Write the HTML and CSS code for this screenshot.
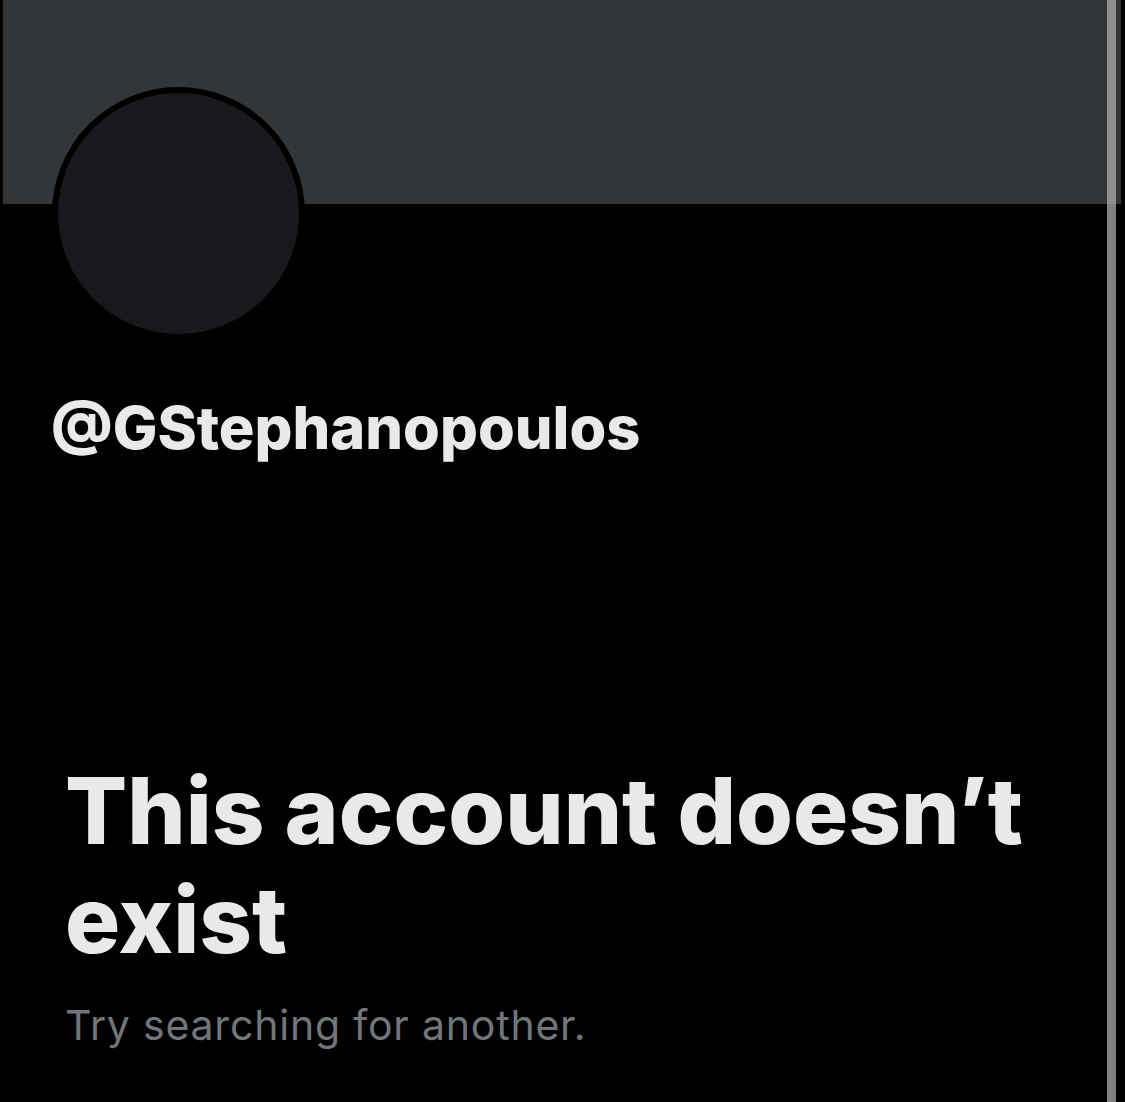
FILE: index.html
```html
<!DOCTYPE html>
<html lang="en">
<head>
<meta charset="utf-8">
<title>Profile</title>
<link rel="stylesheet" href="styles.css">
</head>
<body>
<div class="page">
  <main class="profile">
    <div class="banner"></div>
    <div class="avatar"></div>
    <div class="handle">@GStephanopoulos</div>
    <section class="empty">
      <h1 class="title">This account doesn’t exist</h1>
      <p class="sub">Try searching for another.</p>
    </section>
  </main>
  <div class="scrollbar"></div>
</div>
</body>
</html>
```

FILE: styles.css
```css
html, body {
  margin: 0;
  padding: 0;
  background: #000;
  height: 100%;
  overflow: hidden;
}
.page {
  position: relative;
  height: 1102px;
  padding-left: 3px;
  padding-right: 4px;
  font-family: Inter, "Noto Sans", sans-serif;
}
.profile {
  display: flex;
  flex-direction: column;
}
.banner {
  height: 204px;
  background: #333639;
}
.avatar {
  width: 241px;
  height: 241px;
  margin-top: -117px;
  margin-left: 49px;
  border: 6px solid #000;
  border-radius: 50%;
  background: #17191c;
}
.handle {
  margin-top: 52px;
  margin-left: 48px;
  font-size: 59.5px;
  line-height: 70px;
  font-weight: 800;
  color: #e7e9ea;
}
.empty {
  margin-top: 294px;
  margin-left: 62px;
  margin-right: 60px;
}
.title {
  margin: 0;
  font-size: 92px;
  line-height: 109px;
  font-weight: 800;
  color: #e7e9ea;
}
.sub {
  margin: 29px 0 0;
  font-size: 41px;
  line-height: 44px;
  font-weight: 400;
  letter-spacing: 0.8px;
  color: #71767b;
}
.scrollbar {
  position: absolute;
  top: 0;
  left: 1107px;
  width: 9px;
  height: 100%;
  background: linear-gradient(#8f8f8f 0, #8f8f8f 204px, #808080 204px, #808080 100%);
}
```
